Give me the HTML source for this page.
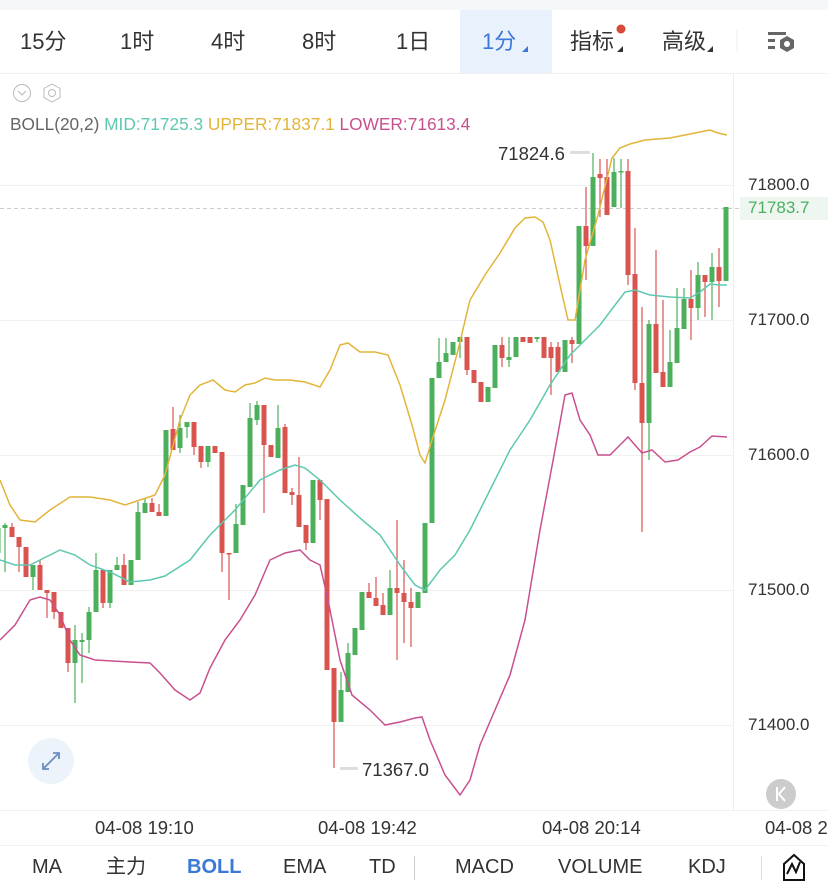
<!DOCTYPE html>
<html><head><meta charset="utf-8">
<style>
*{margin:0;padding:0;box-sizing:border-box}
body{width:828px;height:892px;background:#fff;position:relative;overflow:hidden;font-family:"Liberation Sans","Noto Sans CJK SC",sans-serif;color:#333}
.top{position:absolute;left:0;top:0;width:828px;height:10px;background:#f5f7f9}
.tab{position:absolute;top:28px;font-size:22px;line-height:28px;color:#333}
.act{position:absolute;left:460px;top:10px;width:92px;height:63px;background:#e8f1fc}
.btab{position:absolute;top:855px;font-size:20px;line-height:24px;color:#333}
.ax{position:absolute;font-size:17px;color:#333;white-space:nowrap}
</style></head><body>
<div class="top"></div>
<div class="act"></div>
<div class="tab" style="left:20px">15分</div>
<div class="tab" style="left:120px">1时</div>
<div class="tab" style="left:211px">4时</div>
<div class="tab" style="left:302px">8时</div>
<div class="tab" style="left:396px">1日</div>
<div class="tab" style="left:482px;color:#3b78d8">1分</div>
<div class="tab" style="left:570px">指标</div>
<div class="tab" style="left:662px">高级</div>
<svg width="828" height="892" style="position:absolute;left:0;top:0" id="s">
<polygon points="522,52 528,52 528,46" fill="#3b78d8"/>
<polygon points="617,52 623,52 623,46" fill="#333"/>
<polygon points="707,52 713,52 713,46" fill="#333"/>
<circle cx="621" cy="29" r="4.5" fill="#d84a3c"/>
<line x1="737" y1="30" x2="737" y2="52" stroke="#eee"/>
<g fill="#666"><rect x="768" y="32" width="18" height="3"/><rect x="768" y="39" width="7" height="3"/><rect x="768" y="46" width="7" height="3"/></g>
<polygon points="787,36 794,40 794,48 787,52 780,48 780,40" fill="#666"/><circle cx="787" cy="44" r="3" fill="#fff"/>
<line x1="0" y1="73.5" x2="828" y2="73.5" stroke="#f0f0f0"/>
<circle cx="22" cy="93" r="8.5" fill="none" stroke="#bbb"/><polyline points="18,91 22,95 26,91" fill="none" stroke="#bbb"/>
<polygon points="52,84 60,88.5 60,97.5 52,102 44,97.5 44,88.5" fill="none" stroke="#bbb"/><circle cx="52" cy="93" r="3.5" fill="none" stroke="#bbb"/>
<line x1="733.5" y1="74" x2="733.5" y2="810" stroke="#eee"/>
<g stroke="#f0f0f0"><line x1="0" y1="185.5" x2="733" y2="185.5"/><line x1="0" y1="320.5" x2="733" y2="320.5"/><line x1="0" y1="455.5" x2="733" y2="455.5"/><line x1="0" y1="590.5" x2="733" y2="590.5"/><line x1="0" y1="725.5" x2="733" y2="725.5"/></g>
<line x1="0" y1="810.5" x2="828" y2="810.5" stroke="#f0f0f0"/>
<line x1="0" y1="208.5" x2="828" y2="208.5" stroke="#ccc" stroke-dasharray="4,3"/>
<rect x="740" y="197" width="88" height="23" fill="#eef7ef"/>
<g id="c"></g>
<polyline fill="none" stroke="#e2b53a" stroke-width="1.5" points="0,480 10,505 20,520 35,522 50,510 70,497 90,497 110,500 125,505 140,500 155,495 165,475 180,420 190,395 200,385 213,380 225,390 235,392 245,385 255,383 265,378 275,380 290,380 305,382 320,387 330,370 340,345 348,343 360,352 375,352 388,355 400,385 412,425 420,455 425,463 432,440 445,400 458,350 470,300 485,275 500,253 515,228 525,218 535,217 543,222 550,240 560,285 568,320 575,320 585,260 598,215 612,158 620,148 630,144 645,140 670,138 690,134 710,130 718,133 727,135"/>
<polyline fill="none" stroke="#5ec8b0" stroke-width="1.5" points="0,560 15,565 30,565 50,555 60,550 75,555 90,565 110,572 130,582 150,580 165,576 190,560 210,535 235,510 260,480 280,470 295,465 305,468 320,480 340,500 360,518 380,535 400,565 415,585 425,590 440,570 455,555 470,530 490,490 510,450 530,420 550,385 570,355 580,345 600,325 615,305 625,292 635,290 650,295 670,297 690,298 700,292 710,284 720,285 727,285"/>
<polyline fill="none" stroke="#c9508e" stroke-width="1.5" points="0,640 15,625 30,600 40,597 50,600 60,615 70,640 80,655 95,660 130,662 150,663 160,673 175,690 190,700 200,693 210,668 225,640 240,620 255,595 270,560 285,553 300,550 310,560 320,565 328,600 340,660 352,695 370,710 385,725 400,722 415,718 422,717 430,740 445,775 460,795 470,780 480,745 495,710 510,675 525,620 540,530 555,450 565,395 572,393 580,420 590,435 598,455 610,455 620,445 628,437 635,445 642,453 652,450 665,462 678,460 690,452 700,447 712,436 727,437"/>
<rect x="570" y="151" width="20" height="3" fill="#ddd"/>
<rect x="340" y="767" width="18" height="3" fill="#ddd"/>
<circle cx="51" cy="761" r="23" fill="#edf3fb"/>
<g stroke="#6a8fc0" stroke-width="1.8" fill="none"><line x1="43" y1="769" x2="59" y2="753"/><polyline points="53,753 59,753 59,759"/><polyline points="43,763 43,769 49,769"/></g>
<circle cx="781" cy="794" r="15" fill="#ccc"/>
<g stroke="#fff" stroke-width="2" fill="none"><line x1="777" y1="787" x2="777" y2="801"/><polyline points="785,787 779,794 785,801"/></g>
<line x1="0" y1="845.5" x2="828" y2="845.5" stroke="#f2f2f2"/>
<line x1="414.5" y1="856" x2="414.5" y2="880" stroke="#ccc"/>
<line x1="761.5" y1="856" x2="761.5" y2="880" stroke="#ddd"/>
<path d="M784,880 L784,864 L794,855 L804,864 L804,880 Z" fill="none" stroke="#111" stroke-width="2"/>
<polyline points="787,874 792,864 796,872 800,862" fill="none" stroke="#111" stroke-width="2"/>
</svg>
<div class="ax" style="left:10px;top:114px;font-size:17.3px"><span style="color:#666">BOLL(20,2)</span> <span style="color:#5ec8b0">MID:71725.3</span> <span style="color:#e2b53a">UPPER:71837.1</span> <span style="color:#c9508e">LOWER:71613.4</span></div>
<div class="ax" style="left:498px;top:143px;font-size:18.5px">71824.6</div>
<div class="ax" style="left:362px;top:759px;font-size:18.5px">71367.0</div>
<div class="ax" style="left:748px;top:175px">71800.0</div>
<div class="ax" style="left:748px;top:198px;color:#4caf60">71783.7</div>
<div class="ax" style="left:748px;top:310px">71700.0</div>
<div class="ax" style="left:748px;top:445px">71600.0</div>
<div class="ax" style="left:748px;top:580px">71500.0</div>
<div class="ax" style="left:748px;top:715px">71400.0</div>
<div class="ax" style="left:95px;top:817px;font-size:18.5px">04-08 19:10</div>
<div class="ax" style="left:318px;top:817px;font-size:18.5px">04-08 19:42</div>
<div class="ax" style="left:542px;top:817px;font-size:18.5px">04-08 20:14</div>
<div class="ax" style="left:765px;top:817px;font-size:18.5px">04-08 20:46</div>
<div class="btab" style="left:32px">MA</div>
<div class="btab" style="left:106px">主力</div>
<div class="btab" style="left:187px;color:#3b78d8;font-weight:bold">BOLL</div>
<div class="btab" style="left:283px">EMA</div>
<div class="btab" style="left:369px">TD</div>
<div class="btab" style="left:455px">MACD</div>
<div class="btab" style="left:558px">VOLUME</div>
<div class="btab" style="left:688px">KDJ</div>
<script>
var d=[["G",528,553,525,560],["G",525,528,523,572],["R",527,537,523,537],["R",537,547,537,572],["R",547,577,547,577],["G",565,577,565,590],["R",565,590,560,590],["R",590,593,590,618],["R",592,612,592,619],["R",612,628,612,628],["R",628,663,628,672],["G",640,663,625,703],["G",640,642,633,683],["G",612,640,607,653],["G",570,612,553,612],["R",570,603,570,608],["G",570,603,570,608],["G",565,570,557,570],["R",565,585,554,585],["G",560,585,560,585],["G",512,560,502,560],["G",503,513,498,513],["R",503,512,498,512],["R",512,516,504,516],["G",430,516,430,516],["R",429,450,407,450],["G",428,448,415,453],["G",422,427,422,438],["R",422,447,422,455],["R",446,462,446,468],["G",446,462,446,467],["R",446,453,446,453],["R",452,553,452,572],["R",553,554,553,600],["G",524,553,504,553],["G",485,525,485,525],["G",418,487,403,487],["G",405,420,401,425],["R",405,445,405,513],["R",445,457,445,457],["G",428,458,405,458],["R",427,493,424,493],["R",492,495,488,505],["R",495,527,457,527],["R",525,543,525,550],["G",480,543,480,543],["R",480,500,480,520],["R",499,670,499,670],["R",668,722,668,768],["G",690,722,672,722],["G",653,692,643,692],["G",628,655,628,655],["G",592,630,592,630],["R",592,598,583,598],["R",598,606,577,606],["R",605,615,593,615],["G",588,615,570,615],["R",588,593,520,660],["R",593,602,560,643],["R",602,608,588,647],["G",592,608,592,608],["G",523,593,523,593],["G",378,523,378,523],["G",362,378,338,378],["G",353,362,338,362],["G",342,355,342,355],["G",337,342,337,358],["R",337,370,337,375],["R",370,383,370,383],["R",382,402,382,402],["G",387,402,387,402],["G",345,388,345,388],["R",345,358,337,367],["G",357,360,337,367],["G",337,357,337,357],["R",337,342,337,342],["R",337,343,337,343],["G",337,339,337,342],["R",337,358,337,358],["R",347,358,342,395],["R",347,372,342,372],["G",340,372,340,372],["R",340,344,337,363],["G",226,344,226,344],["R",226,246,187,280],["G",177,246,153,246],["R",174,178,159,217],["R",177,215,159,215],["G",172,207,158,207],["G",171,172,159,208],["R",171,275,159,285],["R",274,383,228,390],["R",383,423,307,532],["G",324,423,320,460],["R",324,373,250,373],["R",372,387,300,387],["G",362,387,330,387],["G",328,363,288,363],["G",299,329,288,329],["R",299,308,270,340],["G",275,308,262,320],["R",275,282,275,317],["G",267,282,253,320],["R",267,281,248,307],["G",207,281,207,281]];
var h="";for(var i=0;i<d.length;i++){var c=d[i],x=-2+7*i,col=c[0]=="G"?"#4caf5c":"#d9534f";h+='<line x1="'+x+'" y1="'+c[3]+'" x2="'+x+'" y2="'+c[4]+'" stroke="'+col+'" stroke-width="1.2"/><rect x="'+(x-2.5)+'" y="'+c[1]+'" width="5" height="'+Math.max(1.5,c[2]-c[1])+'" fill="'+col+'"/>';}
document.getElementById("c").innerHTML=h;
</script>
</body></html>
